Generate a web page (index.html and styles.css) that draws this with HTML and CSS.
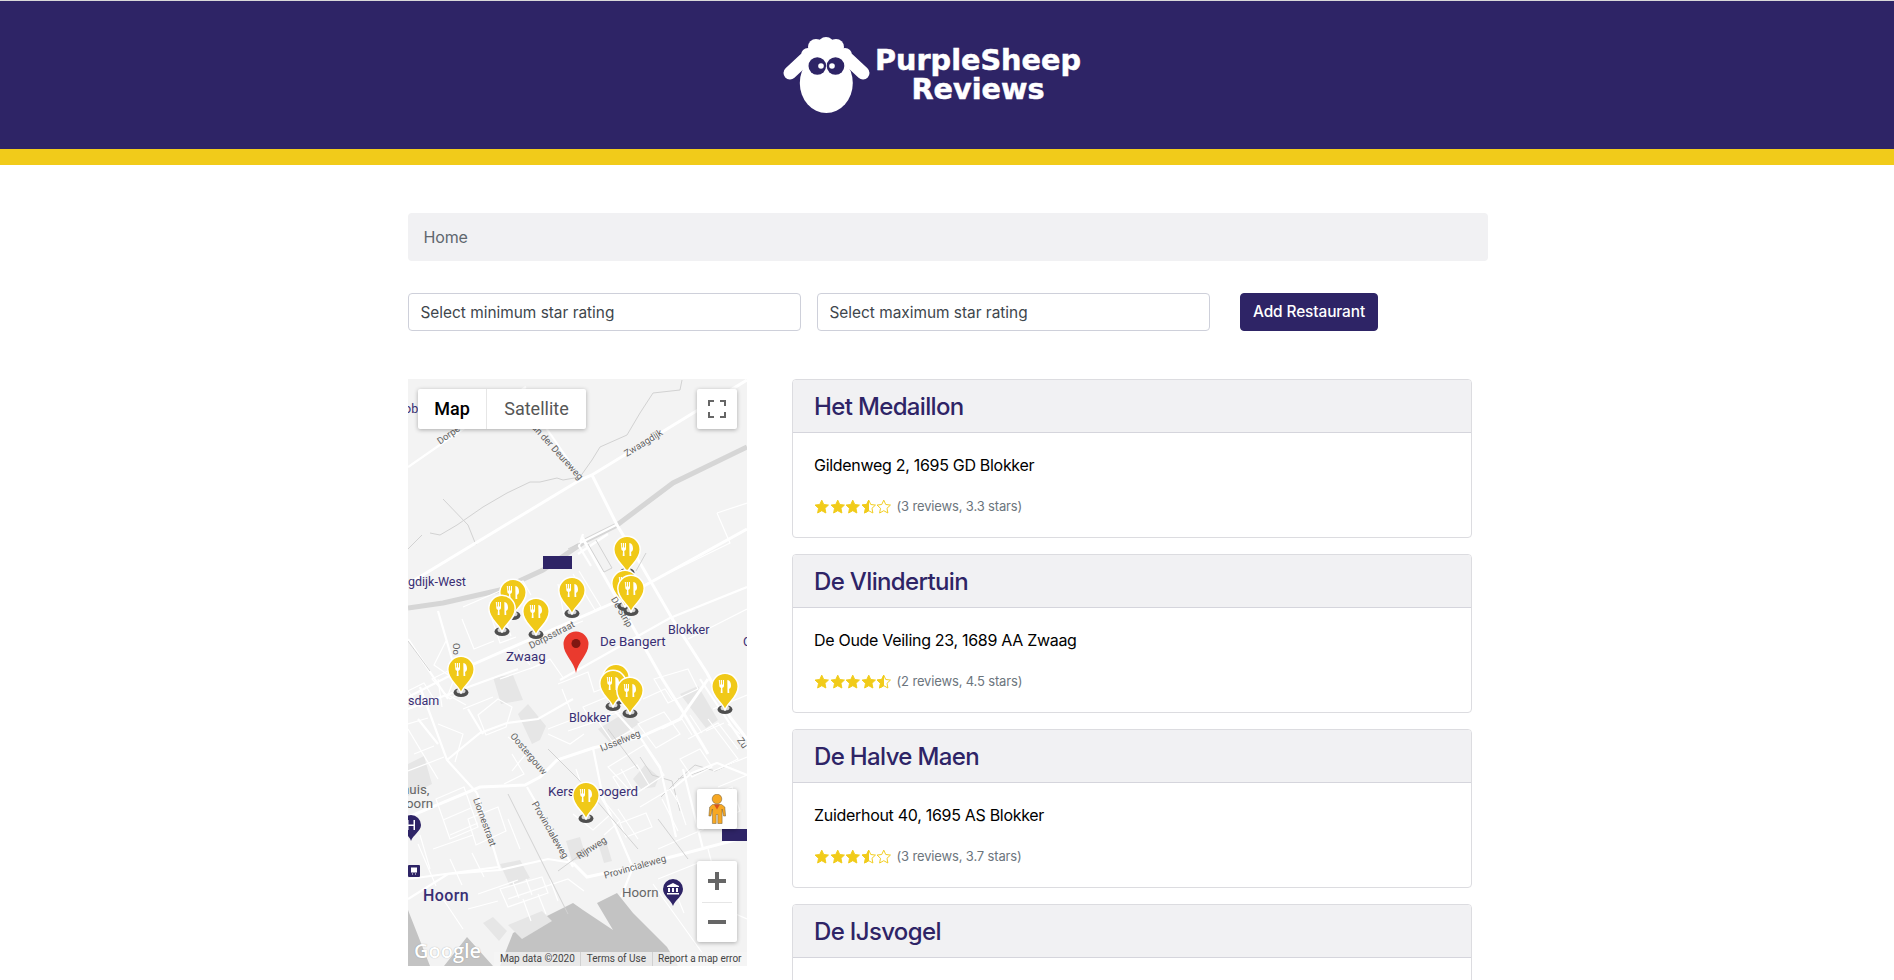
FILE: index.html
```html
<!DOCTYPE html>
<html lang="en">
<head>
<meta charset="utf-8">
<title>PurpleSheep Reviews</title>
<link rel="stylesheet" href="styles.css">
</head>
<body>
<svg class="defs" width="0" height="0" aria-hidden="true">
  <defs>
    <symbol id="star" viewBox="0 0 24 24"><path d="M12 1.800l3.100 6.700 7.300.9-5.400 5 1.400 7.300L12 18.100l-6.400 3.600 1.400-7.300-5.400-5 7.300-.9z"/></symbol>
    <symbol id="pin" viewBox="0 0 32 50" overflow="visible">
      <ellipse class="pin-shadow" cx="16" cy="38.500" rx="7.500" ry="4.500"/>
      <ellipse class="pin-shadow-in" cx="16" cy="37" rx="4.500" ry="2.500"/>
      <path class="pin-body" d="M16 39.500C14.500 32 2.800 27 2.800 15.500A13.200 13.200 0 0 1 29.200 15.500C29.200 27 17.500 32 16 39.500z"/>
      <path class="pin-fork" d="M9.800 9h1.100v4.600h.9V9h1.200v4.600h.9V9h1.100v5.800c0 1.300-.8 1.900-1.700 2.100l.3 5.100h-1.900l.3-5.100c-.9-.2-1.700-.8-1.700-2.100zM18.300 9c2.600.3 3.700 2.800 3.700 5.400 0 1.700-.7 3-1.900 3.400l.2 4.200h-1.800z"/>
    </symbol>
  </defs>
</svg>

<header class="site-header">
  <a class="logo" href="#">
    <svg class="sheep" viewBox="45 35 88 80" width="88" height="80" aria-hidden="true">
      <g class="wool">
        <path class="ear" d="M67 59L52 73M110 59L125 73"/>
        <circle cx="70" cy="55" r="7"/><circle cx="78" cy="47" r="8"/><circle cx="88" cy="45" r="8"/><circle cx="98" cy="47" r="8"/><circle cx="107" cy="55" r="7"/>
        <ellipse cx="88" cy="58" rx="24" ry="12"/>
        <ellipse cx="88.300" cy="83" rx="26.500" ry="30"/>
      </g>
      <circle class="eye" cx="79.300" cy="66" r="8.800"/><circle class="eye" cx="97.500" cy="66" r="8.800"/>
      <circle class="glint" cx="83" cy="66" r="2.800"/><circle class="glint" cx="94" cy="66" r="2.800"/>
    </svg>
    <span class="logo-text"><span>PurpleSheep</span><span>Reviews</span></span>
  </a>
</header>
<div class="header-rule"></div>

<main class="page">
  <nav class="crumb">Home</nav>

  <form class="filters">
    <select class="picker"><option>Select minimum star rating</option></select>
    <select class="picker"><option>Select maximum star rating</option></select>
    <button class="add-btn" type="button">Add Restaurant</button>
  </form>

  <div class="content">
    <section class="map">
      <svg class="map-art" viewBox="0 0 339 587" width="339" height="587" aria-hidden="true">
        <!-- water and land blocks -->
        <path class="water" d="M92 587L105 554 165 524 175 531 205 551 189 524 209 514 225 534 259 568 270 587zM0 531L22 587H0zM36 587L59 558 85 587z"/>
        <path class="block" d="M110 335l10-10 18 22-6 14-8 4zM190 350l30-18 12 12-30 20zM272 315l18-8 20 34-12 8zM0 385l16-8 8 28-24 12zM85 298l20-2 10 25-22 4zM225 400l12-14 14 12-4 10-14 2zM158 462l14-4 6 20-14 4zM190 464l8-2 6 20-8 2zM92 485l20-4 10 18-20 8zM75 544l10-6 14 14-8 10zM100 546l34-14 10 10-30 18z"/>
        <!-- ditches -->
        <path class="ditch" d="M22 154l10 2 17-10 26-18 24-14 23-11h10l17-4 6 2 17-3 12-17 8-13 27-12 13-22 13-20 27-3 2-10"/>
        <path class="ditch" d="M35 120l25 26 8 20M0 170l14-14"/>
        <path class="ditch" d="M253 418l20-20 14-12 20 6 22-10M232 378l12 18 20 6 8 30M270 400l30-10"/>
        <!-- highway -->
        <path class="highway" d="M0 229L35 224 92 211 135 191 179 161 209 146 265 104 339 68"/>
        <!-- main white roads -->
        <path class="road-l" d="M0 205L172 101 184 96 339 1"/>
        <path class="road-m" d="M0 88L49 54 118 8"/>
        <path class="road-m" d="M112 11L172 98"/>
        <path class="road-l" d="M184 96L209 146 232 184 265 241 299 294 322 338 339 360"/>
        <path class="road-l" d="M174 158L255 301 272 328 300 375"/>
        <path class="road-l" d="M59 288L205 224 265 191 339 150"/>
        <path class="road-m" d="M0 318L59 288M152 301L262 239 339 208M0 330L110 290"/>
        <path class="road-m" d="M170 165l40-20M175 155l-4 12 12 20M170 175l30-20"/>
        <path class="road-m" d="M30 232l16 55M0 260l20 30 20 30"/>
        <!-- south roads -->
        <path class="road-l" d="M0 438L72 408 117 406 132 398 149 381 185 369 232 358 272 340 300 300"/>
        <path class="road-l" d="M165 484L179 498 225 488 339 458"/>
        <path class="road-m" d="M119 408L165 488M69 414L92 491M39 381L72 354 99 344 130 340 165 320M12 308L39 381 69 414M0 520L40 495 92 491 140 480 165 484M0 500l90-12"/>
        <path class="road-m" d="M185 369l10 50 30 70M232 358l20 30 16 70M264 410l20-16 25-10 30 12M225 488l-12 30M275 390l20 80"/>
        <path class="road-m" d="M60 330l15 25M10 340l20 25M205 330l25 28M292 300l20 30 27 40"/>
        <!-- thin streets -->
        <path class="road-s" d="M309 134l13 30-90 44M309 134l30-10M280 260l59-30M55 228l60-26 8 14M54 240l12 30 20-8M150 205l6 32M165 195l22 36 6-3-22-36M38 262l-12 24 20 14-6 16 18 10"/>
        <path class="road-s" d="M90 320l14 8-6 20-20 8-8-20zM30 345l25 10-8 28M100 358l20 14-16 20M60 440l30-12 8 24-30 14zM25 470l40-14M12 456l10 34M100 440l12 30M35 520l20 30M100 520l60-20 16 12M130 515l8 20M115 520l8 22M142 500l8 22M70 515l40-14M60 530l30-8"/>
        <path class="road-s" d="M150 305l30-12 6 20 16-6 10 26-30 10M160 352l30-10 14 20 22-12M230 345l26-12 16 22-24 14zM200 388l36-22 20 30-30 20zM188 412l24 30-16 14M232 428l30-18 10 16M246 300l14 24 30-14-10-20zM305 330l34-14M280 360l30-16 20 26M300 340l30 40-20 10M290 420l34-12 8 24-30 14zM250 470l46-20M300 470l16 60 23 10M250 500l40-16 20 60"/>
        <path class="road-s" d="M245 505l50 70M154 310l12 30-26 10M122 290l20-10 14 20M320 345l12 10M165 435l20 16 18-16-10-16M178 420l-10 -30M210 430l20 30M0 350l30 50M0 392l36-14"/>
        <path class="road-s" d="M24 300l20-10 12 22-14 8zM0 312l16-8 10 16-14 8zM55 330l30-12M135 258l40-16M110 270l12 16M84 240l8 24 16-6M95 235l8 22"/>
        <path class="road-s" d="M28 420l28-12 14 40-28 12zM35 441l28-12M42 456l28-12M10 465l18 42M42 480l12 26M64 474l12 24M92 510l42-12 6 16-40 14zM105 503l6 16M118 500l6 16M205 398l24-12 12 20-22 14zM213 390l14 24M254 350l20-10 10 16M282 336l12 18M298 352l18-8M272 380l20-10 12 18-20 10zM305 392l34-14M310 408l29-12M254 420l16 32M268 416l10 30M212 444l26-10 6 14-26 10zM262 500l14 34M290 495l8 24M140 355l22 10 14-10M175 328l24-10 8 14-24 10z"/>
        <path class="road-s" d="M92 300l40-14M6 375l20-8M30 300l4 28M104 375l12 20-20 10M0 345l20-6M235 320l22-10 8 12M216 300l8 16M200 318l12 14"/>
        <path class="ditch" d="M0 262l22 30M228 192l10-18M160 170l12-6M180 165l16 28 8-4-16-28"/>
        <path class="ditch" d="M140 370l30 30 60 70M100 415l20 40 40 80M180 470l-30 22M200 350l30 40M250 440l30 40"/>
      </svg>

      <span class="map-label" style="left:-4px;top:22px">ob</span>
      <span class="map-label" style="left:0;top:195px">gdijk-West</span>
      <span class="map-label big" style="left:98px;top:270px">Zwaag</span>
      <span class="map-label big" style="left:192px;top:255px">De Bangert</span>
      <span class="map-label" style="left:260px;top:243px">Blokker</span>
      <span class="map-label" style="left:335px;top:255px">O</span>
      <span class="map-label" style="left:0;top:314px">sdam</span>
      <span class="map-label" style="left:161px;top:331px">Blokker</span>
      <span class="map-label big" style="left:140px;top:405px">Kersenboogerd</span>
      <span class="map-label grey big" style="left:-6px;top:403px">huis,</span>
      <span class="map-label grey big" style="left:-2px;top:417px">oorn</span>
      <span class="map-label strong" style="left:15px;top:508px">Hoorn</span>
      <span class="map-label grey big" style="left:214px;top:506px">Hoorn</span>

      <span class="street" style="left:28px;top:50px;transform:rotate(-35deg)">Dorpe</span>
      <span class="street" style="left:214px;top:58px;transform:rotate(-32deg)">Zwaagdijk</span>
      <span class="street" style="left:114px;top:67px;transform:rotate(48deg)">an der Deureweg</span>
      <span class="street" style="left:119px;top:250px;transform:rotate(-27deg)">Dorpsstraat</span>
      <span class="street" style="left:197px;top:227px;transform:rotate(60deg)">De Strip</span>
      <span class="street" style="left:42px;top:264px;transform:rotate(90deg)">Oo</span>
      <span class="street" style="left:95px;top:369px;transform:rotate(50deg)">Oostergouw</span>
      <span class="street" style="left:191px;top:356px;transform:rotate(-22deg)">IJsselweg</span>
      <span class="street" style="left:110px;top:445px;transform:rotate(60deg)">Provincialeweg</span>
      <span class="street" style="left:167px;top:463px;transform:rotate(-33deg)">Rijnweg</span>
      <span class="street" style="left:195px;top:482px;transform:rotate(-16deg)">Provincialeweg</span>
      <span class="street" style="left:51px;top:437px;transform:rotate(70deg)">Liornestraat</span>
      <span class="street" style="left:329px;top:358px;transform:rotate(55deg)">Zu</span>

      <span class="redact" style="left:135px;top:177px;width:29px;height:13px"></span>
      <span class="redact" style="left:314px;top:450px;width:25px;height:12px"></span>

      <svg class="poi" style="left:-7px;top:436px" viewBox="0 0 20 26" width="20" height="26" aria-hidden="true"><path class="poi-body" d="M10 26C8 20 0 16 0 10a10 10 0 0 1 20 0c0 6-8 10-10 16z"/><path class="poi-mark" d="M6 5h1.500v4.500h5V5H14v10h-1.500v-4h-5v4H6z"/></svg>
      <svg class="poi" style="left:0;top:486px" viewBox="0 0 12 12" width="12" height="12" aria-hidden="true"><rect class="poi-body" width="12" height="12" rx="1"/><path class="poi-mark" d="M3 2.500h6v5H3zM4 8.500h1v1H4zM7 8.500h1v1H7z"/></svg>
      <svg class="poi" style="left:255px;top:500px" viewBox="0 0 20 27" width="20" height="27" aria-hidden="true"><path class="poi-body" d="M10 27C8 21 0 17 0 10a10 10 0 0 1 20 0c0 7-8 11-10 17z"/><path class="poi-mark" d="M10 4l6 3v1H4V7zM5 9h2v4H5zM9 9h2v4H9zM13 9h2v4h-2zM4 14h12v1.500H4z"/></svg>

      <svg class="pin" style="left:203px;top:155px"><use href="#pin"/></svg>
      <svg class="pin" style="left:201px;top:189px"><use href="#pin"/></svg>
      <svg class="pin" style="left:207px;top:194px"><use href="#pin"/></svg>
      <svg class="pin" style="left:89px;top:198px"><use href="#pin"/></svg>
      <svg class="pin" style="left:78px;top:214px"><use href="#pin"/></svg>
      <svg class="pin" style="left:112px;top:217px"><use href="#pin"/></svg>
      <svg class="pin" style="left:148px;top:196px"><use href="#pin"/></svg>
      <svg class="pin" style="left:37px;top:275px"><use href="#pin"/></svg>
      <svg class="pin" style="left:192px;top:283px"><use href="#pin"/></svg>
      <svg class="pin" style="left:189px;top:289px"><use href="#pin"/></svg>
      <svg class="pin" style="left:206px;top:296px"><use href="#pin"/></svg>
      <svg class="pin" style="left:301px;top:292px"><use href="#pin"/></svg>
      <svg class="pin" style="left:162px;top:401px"><use href="#pin"/></svg>

      <svg class="marker" viewBox="0 0 26 42" width="26" height="42" aria-hidden="true"><path class="marker-body" d="M13 42C11 30 0.500 24 0.500 13a12.500 12.500 0 0 1 25 0C25.500 24 15 30 13 42z"/><circle class="marker-dot" cx="13" cy="12.500" r="4.500"/></svg>

      <div class="map-type ctl">
        <span class="type on">Map</span>
        <span class="type">Satellite</span>
      </div>
      <div class="fullscreen ctl">
        <svg viewBox="0 0 18 18" width="18" height="18" aria-hidden="true"><path class="ctl-icon" d="M0 6V0h6v2H2v4zM12 0h6v6h-2V2h-4zM18 12v6h-6v-2h4v-4zM6 18H0v-6h2v4h4z"/></svg>
      </div>
      <div class="pegman ctl">
        <svg viewBox="0 0 18 30" width="18" height="30" aria-hidden="true"><circle class="peg" cx="9" cy="5" r="4.800"/><path class="peg" d="M4.500 10.500h9l3.300 2.500.8 9h-2l-1.500-7v14.500H9.800v-9H8.200v9H4.400V15l-1.500 7h-2l.8-9z"/><path class="peg-tie" d="M6 10.500h6l-3 5z"/></svg>
      </div>
      <div class="zoom ctl">
        <span class="zoom-btn"><svg viewBox="0 0 18 18" width="18" height="18" aria-hidden="true"><path class="ctl-icon" d="M7 0h4v7h7v4h-7v7H7v-7H0V7h7z"/></svg></span>
        <span class="zoom-btn sep"><svg viewBox="0 0 18 4" width="18" height="4" aria-hidden="true"><path class="ctl-icon" d="M0 0h18v4H0z"/></svg></span>
      </div>
      <span class="google">Google</span>
      <div class="attrib"><span>Map data ©2020</span><span>Terms of Use</span><span>Report a map error</span></div>
    </section>

    <div class="list">
      <article class="card">
        <h2 class="card-head"><a href="#">Het Medaillon</a></h2>
        <div class="card-body">
          <p class="address">Gildenweg 2, 1695 GD Blokker</p>
          <div class="rating">
            <span class="stars"><svg class="star"><use href="#star"/></svg><svg class="star"><use href="#star"/></svg><svg class="star"><use href="#star"/></svg><span class="half"><svg class="star empty"><use href="#star"/></svg><span class="half-fill"><svg class="star"><use href="#star"/></svg></span></span><svg class="star empty"><use href="#star"/></svg></span>
            <small>(3 reviews, 3.3 stars)</small>
          </div>
        </div>
      </article>
      <article class="card">
        <h2 class="card-head"><a href="#">De Vlindertuin</a></h2>
        <div class="card-body">
          <p class="address">De Oude Veiling 23, 1689 AA Zwaag</p>
          <div class="rating">
            <span class="stars"><svg class="star"><use href="#star"/></svg><svg class="star"><use href="#star"/></svg><svg class="star"><use href="#star"/></svg><svg class="star"><use href="#star"/></svg><span class="half"><svg class="star empty"><use href="#star"/></svg><span class="half-fill"><svg class="star"><use href="#star"/></svg></span></span></span>
            <small>(2 reviews, 4.5 stars)</small>
          </div>
        </div>
      </article>
      <article class="card">
        <h2 class="card-head"><a href="#">De Halve Maen</a></h2>
        <div class="card-body">
          <p class="address">Zuiderhout 40, 1695 AS Blokker</p>
          <div class="rating">
            <span class="stars"><svg class="star"><use href="#star"/></svg><svg class="star"><use href="#star"/></svg><svg class="star"><use href="#star"/></svg><span class="half"><svg class="star empty"><use href="#star"/></svg><span class="half-fill"><svg class="star"><use href="#star"/></svg></span></span><svg class="star empty"><use href="#star"/></svg></span>
            <small>(3 reviews, 3.7 stars)</small>
          </div>
        </div>
      </article>
      <article class="card">
        <h2 class="card-head"><a href="#">De IJsvogel</a></h2>
        <div class="card-body card-body-empty"></div>
      </article>
    </div>
  </div>
</main>
</body>
</html>
```

FILE: styles.css
```css
* { box-sizing: border-box; }
html, body { height: 980px; overflow: hidden; }
body {
  margin: 0;
  background: #fff;
  color: #212529;
  font-family: Inter, "Liberation Sans", sans-serif;
  font-size: 16px;
  line-height: 1.5;
}
a { color: inherit; text-decoration: none; }
.defs { position: absolute; }

.site-header {
  height: 149px;
  border-top: 1px solid #d9d9d9;
  background: #2e2466;
  display: flex;
  justify-content: center;
  align-items: center;
}
.logo { display: flex; align-items: center; gap: 4px; padding-right: 30px; color: #fff; }
.sheep { display: block; }
.wool { fill: #fff; }
.ear { fill: none; stroke: #fff; stroke-width: 13; stroke-linecap: round; }
.eye { fill: #2e2466; }
.glint { fill: #fff; }
.logo-text {
  display: flex;
  flex-direction: column;
  align-items: center;
  font-family: "DejaVu Sans", sans-serif;
  font-weight: 700;
  font-size: 28.700px;
  line-height: 29px;
  -webkit-text-stroke: .5px #fff;
}
.header-rule { height: 16px; background: #f1cb1a; }

.page { width: 1080px; margin: 48px auto 0 408px; }
.crumb {
  height: 48px;
  padding: 0 15.500px;
  display: flex;
  align-items: center;
  background: #f1f1f3;
  border-radius: 4px;
  color: #5f676e;
  letter-spacing: -.15px;
}

.filters { display: flex; align-items: stretch; margin-top: 32px; height: 38px; }
.picker {
  width: 393px;
  margin-right: 16px;
  padding: 1px 11.500px 0;
  appearance: none;
  background: #fff;
  border: 1px solid #ced0da;
  border-radius: 4px;
  color: #40464c;
  font: 15.400px/1.5 Inter, "Liberation Sans", sans-serif;
}
.add-btn {
  margin-left: 14px;
  width: 138px;
  background: #2e2466;
  border: 1px solid #2e2466;
  border-radius: 4px;
  color: #fff;
  font: 500 15.400px/1.5 Inter, "Liberation Sans", sans-serif;
  letter-spacing: -.1px;
}

.content { display: flex; align-items: flex-start; gap: 45px; margin-top: 48px; }

.map {
  position: relative;
  flex: none;
  width: 339px;
  height: 587px;
  overflow: hidden;
  background: #f3f3f3;
  font-family: Roboto, sans-serif;
}
.map-art { display: block; }
.water { fill: #c3c3c3; }
.block { fill: #e6e6e6; }
.ditch { fill: none; stroke: #d2d2d2; stroke-width: 1; }
.highway { fill: none; stroke: #d6d6d6; stroke-width: 5; }
.road-l { fill: none; stroke: #fff; stroke-width: 3; }
.road-m { fill: none; stroke: #fff; stroke-width: 2.200; }
.road-s { fill: none; stroke: #fff; stroke-width: 1.200; }

.map-label {
  position: absolute;
  color: #392f74;
  font-size: 12.500px;
  line-height: 16px;
  white-space: nowrap;
}
.map-label.big { font-size: 13.300px; }
.map-label.grey { color: #666; }
.map-label.strong { font-size: 16px; font-weight: 500; letter-spacing: .4px; line-height: 18px; }
.street {
  position: absolute;
  color: #616161;
  font-size: 9.500px;
  line-height: 12px;
  white-space: nowrap;
  transform-origin: 50% 50%;
}
.redact { position: absolute; background: #2e2466; }
.poi { position: absolute; display: block; }
.poi-body { fill: #2e2466; }
.poi-mark { fill: #fff; }

.pin { position: absolute; width: 32px; height: 50px; overflow: visible; }
.pin-shadow { fill: #4f4f4f; }
.pin-shadow-in { fill: #d6d6d6; }
.pin-body { fill: #f0c918; stroke: #fff; stroke-width: 1.500; }
.pin-fork { fill: #fff; }

.marker { position: absolute; left: 155px; top: 252px; }
.marker-body { fill: #ea3a2e; }
.marker-dot { fill: #7e1712; }

.ctl {
  position: absolute;
  background: #fff;
  border-radius: 2px;
  box-shadow: 0 1px 4px rgba(0, 0, 0, .3);
  display: flex;
  align-items: center;
  justify-content: center;
}
.ctl-icon { fill: #666; }
.map-type { left: 10px; top: 10px; width: 168px; height: 40px; }
.type {
  flex: none;
  width: 99px;
  text-align: center;
  color: #565656;
  font-size: 18px;
  line-height: 40px;
}
.type.on { width: 69px; border-right: 1px solid #e6e6e6; color: #000; font-weight: 500; }
.fullscreen { left: 289px; top: 10px; width: 40px; height: 40px; }
.pegman { left: 289px; top: 410px; width: 40px; height: 40px; }
.peg { fill: #f7a823; stroke: #6b5a3a; stroke-width: .5; }
.peg-tie { fill: #d9541e; }
.zoom { left: 289px; top: 482px; width: 40px; height: 81px; flex-direction: column; }
.zoom-btn { flex: 1; width: 100%; display: flex; align-items: center; justify-content: center; position: relative; }
.zoom-btn.sep::before {
  content: "";
  position: absolute;
  top: 0;
  left: 5px;
  right: 5px;
  border-top: 1px solid #e6e6e6;
}
.google {
  position: absolute;
  left: 6px;
  bottom: 3px;
  color: #fff;
  font-family: "Open Sans", sans-serif;
  font-size: 20px;
  font-weight: 600;
  line-height: 24px;
  text-shadow: 0 0 1px rgba(0, 0, 0, .35);
}
.attrib {
  position: absolute;
  right: 0;
  bottom: 0;
  height: 14px;
  display: flex;
  background: rgba(245, 245, 245, .75);
  color: #444;
  font-size: 10px;
  line-height: 14px;
  white-space: nowrap;
}
.attrib span { padding: 0 5.500px; border-left: 1px solid #d0d0d0; }
.attrib span:first-child { border-left: 0; }

.list { width: 680px; display: flex; flex-direction: column; gap: 16px; }
.card {
  flex: none;
  border: 1px solid #dcdce0;
  border-radius: 4px;
  background: #fff;
  overflow: hidden;
}
.card-head {
  margin: 0;
  height: 53px;
  padding: 2px 21px 0;
  display: flex;
  align-items: center;
  background: #f1f1f3;
  border-bottom: 1px solid #d5d5dc;
  color: #2e2466;
  font-size: 24px;
  font-weight: 500;
  line-height: 1.2;
  letter-spacing: -.65px;
}
.card-body { padding: 20px 21px 0; height: 104px; }
.address { margin: 0; color: #000; font-size: 16px; line-height: 24px; letter-spacing: -.3px; }
.rating { display: flex; align-items: center; gap: 5px; margin-top: 18px; height: 24px; }
.stars { display: flex; }
.star { width: 15.500px; height: 15.500px; display: block; fill: #f1cb1a; stroke: #f1cb1a; stroke-width: 1.500; }
.star.empty { fill: #fff; }
.half { position: relative; width: 15.500px; height: 15.500px; display: block; }
.half-fill { position: absolute; left: 0; top: 0; width: 8px; height: 16px; overflow: hidden; display: block; }
small { color: #6c757d; font-size: 13px; letter-spacing: -.15px; }
```
